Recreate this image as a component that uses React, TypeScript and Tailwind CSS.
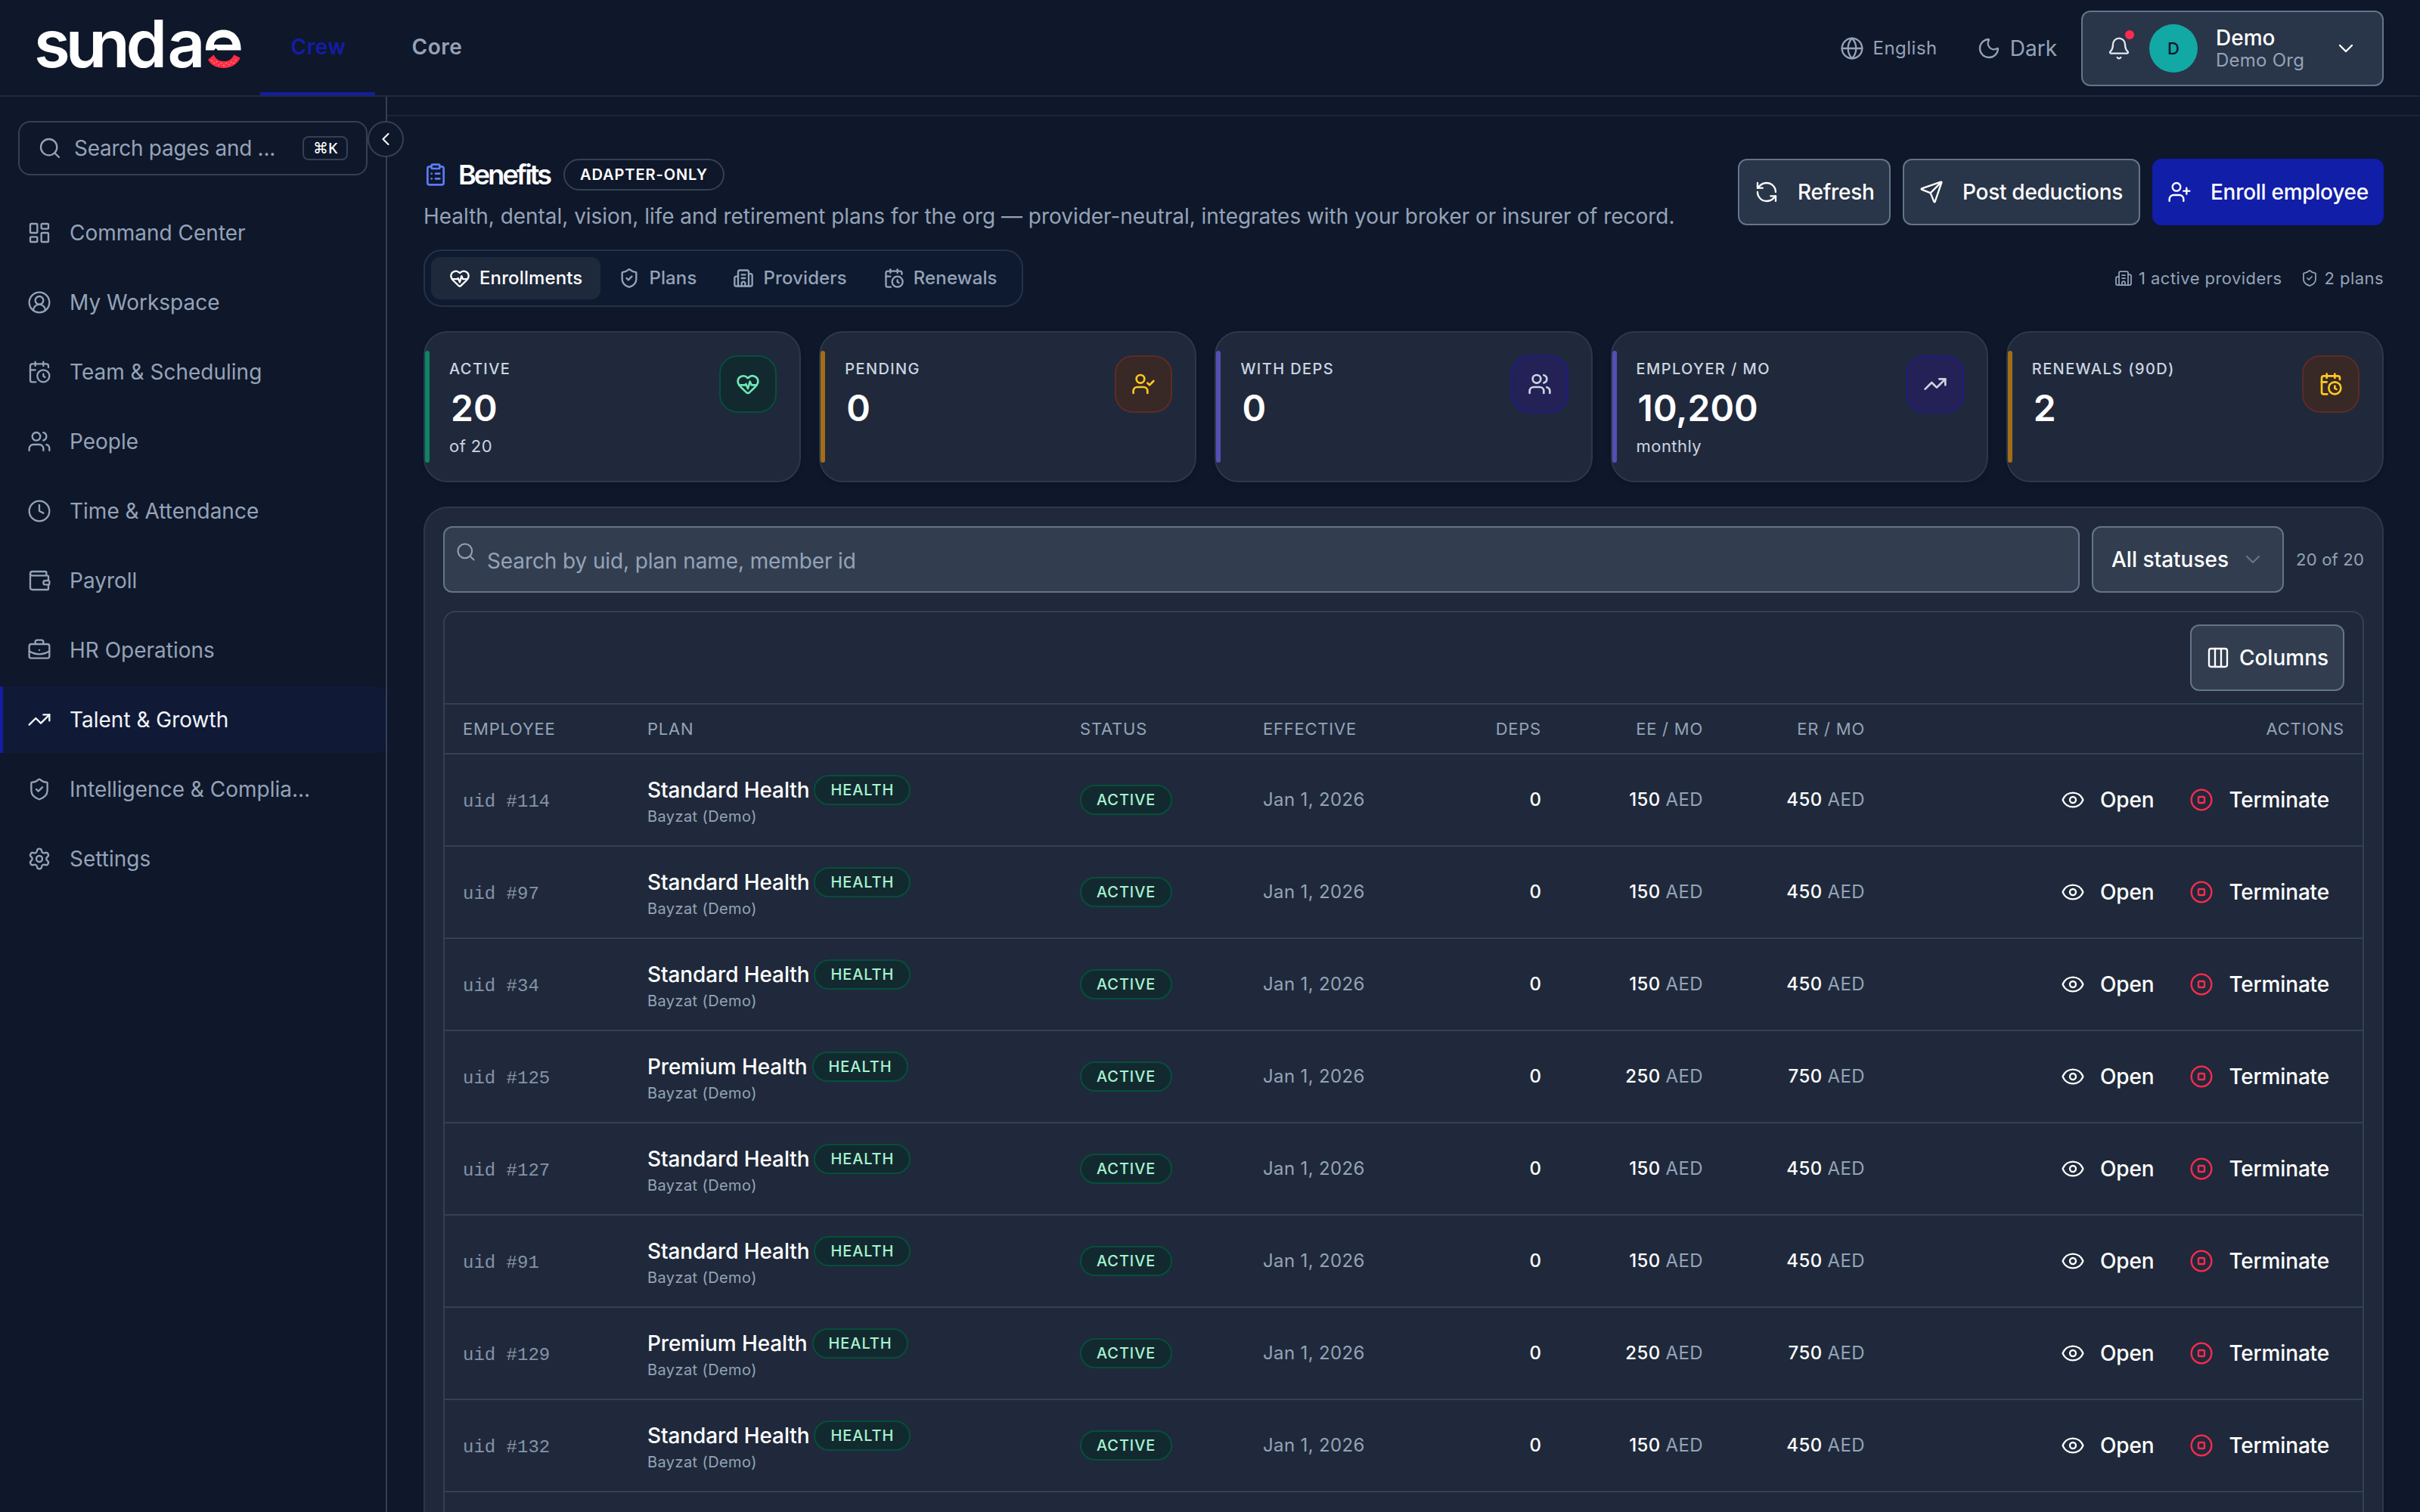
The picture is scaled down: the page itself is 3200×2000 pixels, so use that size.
import React, { useState } from "react";
import {
  BriefcaseBusiness,
  Building2,
  CalendarClock,
  ChevronDown,
  ChevronLeft,
  CircleStop,
  CircleUserRound,
  Clock,
  Columns3,
  Eye,
  Globe,
  HeartPulse,
  LayoutDashboard,
  ClipboardList,
  Bell,
  Moon,
  RefreshCcw,
  Search,
  Send,
  Settings,
  ShieldCheck,
  TrendingUp,
  UserCheck,
  UserPlus,
  Users,
  Wallet,
  type LucideIcon,
} from "lucide-react";

interface NavItem {
  label: string;
  icon: LucideIcon;
}

const NAV_ITEMS: NavItem[] = [
  { label: "Command Center", icon: LayoutDashboard },
  { label: "My Workspace", icon: CircleUserRound },
  { label: "Team & Scheduling", icon: CalendarClock },
  { label: "People", icon: Users },
  { label: "Time & Attendance", icon: Clock },
  { label: "Payroll", icon: Wallet },
  { label: "HR Operations", icon: BriefcaseBusiness },
  { label: "Talent & Growth", icon: TrendingUp },
  { label: "Intelligence & Complia...", icon: ShieldCheck },
  { label: "Settings", icon: Settings },
];

const TABS: NavItem[] = [
  { label: "Enrollments", icon: HeartPulse },
  { label: "Plans", icon: ShieldCheck },
  { label: "Providers", icon: Building2 },
  { label: "Renewals", icon: CalendarClock },
];

const TONES = {
  emerald: {
    bar: "bg-[#0f8464]",
    tile: "border-[#064e3b] bg-[#122a2f] text-[#6ee7b7]",
  },
  amber: {
    bar: "bg-[#a36c18]",
    tile: "border-[#5c2c25] bg-[#382826] text-[#ffc820]",
  },
  indigo: {
    bar: "bg-[#5250b4]",
    tile: "border-[#1d1c80] bg-[#232156] text-[#cbd5e1]",
  },
};

interface Stat {
  label: string;
  value: string;
  hint?: string;
  tone: keyof typeof TONES;
  icon: LucideIcon;
}

const STATS: Stat[] = [
  { label: "ACTIVE", value: "20", hint: "of 20", tone: "emerald", icon: HeartPulse },
  { label: "PENDING", value: "0", tone: "amber", icon: UserCheck },
  { label: "WITH DEPS", value: "0", tone: "indigo", icon: Users },
  { label: "EMPLOYER / MO", value: "10,200", hint: "monthly", tone: "indigo", icon: TrendingUp },
  { label: "RENEWALS (90D)", value: "2", tone: "amber", icon: CalendarClock },
];

interface Enrollment {
  uid: number;
  plan: string;
  ee: number;
  er: number;
}

const ENROLLMENTS: Enrollment[] = [
  { uid: 114, plan: "Standard Health", ee: 150, er: 450 },
  { uid: 97, plan: "Standard Health", ee: 150, er: 450 },
  { uid: 34, plan: "Standard Health", ee: 150, er: 450 },
  { uid: 125, plan: "Premium Health", ee: 250, er: 750 },
  { uid: 127, plan: "Standard Health", ee: 150, er: 450 },
  { uid: 91, plan: "Standard Health", ee: 150, er: 450 },
  { uid: 129, plan: "Premium Health", ee: 250, er: 750 },
  { uid: 132, plan: "Standard Health", ee: 150, er: 450 },
];

const ROW_GRID = "grid grid-cols-[122px_286px_121px_120px_88px_107px_107px_1fr] items-center border-b border-[#334155]";

const SEEDS = [
  [116, 25.6],
  [117.6, 27.2],
  [119.2, 26.4],
  [120.4, 28.4],
  [122.2, 27.4],
  [124, 28.8],
  [125.6, 27.4],
  [127.4, 28.2],
  [128.8, 26.6],
  [130.4, 27.2],
  [131.8, 25.4],
];

function Logo() {
  return (
    <svg width="136" height="34" viewBox="0 0 136 34" className="block overflow-visible">
      <text
        x="-1.5 19.4 35.2 59.4 86.800"
        y="29.8"
        fill="#fff"
        fontFamily="Inter, sans-serif"
        fontSize="43.500"
        fontWeight="600"
      >
        sunda
      </text>
      {/* the "e" is cut open and finished with a smile */}
      <path
        d="M112 18.800C112 10.500 116.500 5.200 123.700 5.200S135.300 10.500 135.300 17.800V18.800H120L118.700 17.400L117.500 18.800ZM117.400 15H129.700C129.400 12 127.200 10.200 123.700 10.200S117.900 12 117.400 15Z"
        fill="#fff"
        fillRule="evenodd"
      />
      <path
        d="M113.500 25L117.300 21.800C118.800 24.800 120.800 26 124 26S129.300 24.600 130.700 21.700L134.900 23.800C132.800 28.200 129 30.500 124 30.500S115.500 28.600 113.500 25Z"
        fill="#ff2b4e"
      />
      {SEEDS.map(([x, y]) => (
        <circle key={x} cx={x} cy={y} r="0.4" fill="#ffc820" />
      ))}
    </svg>
  );
}

function Header() {
  return (
    <header className="flex h-16 shrink-0 items-center border-b border-[#1e293b] px-6">
      <div className="w-[148px]">
        <Logo />
      </div>
      <nav className="flex h-full gap-1 text-[14px] font-semibold tracking-[0.02em]">
        <a className="flex w-19 items-center justify-center border-b-2 border-[#131da6] pt-px pl-px text-[#131da6]">
          Crew
        </a>
        <a className="flex w-[74px] items-center justify-center border-b-2 border-transparent pt-px text-[#94a3b8]">
          Core
        </a>
      </nav>
      <div className="ml-auto flex items-center pt-px text-[#94a3b8]">
        <Globe size={16} strokeWidth={1.75} />
        <span className="ml-1.5 text-[12px] tracking-[0.02em]">English</span>
        <Moon size={16} strokeWidth={1.75} className="ml-6.5" />
        <span className="ml-1.5 text-[14px]">Dark</span>
        <button className="ml-4 flex h-[50px] w-[200px] items-center rounded-md border border-[#64748b] bg-[#293548] pl-4">
          <span className="relative">
            <Bell size={16} strokeWidth={1.75} className="text-[#e2e8f0]" />
            <span className="absolute -top-1 right-[-2px] h-1.5 w-1.5 rounded-full bg-[#ff2b4e]" />
          </span>
          <span className="ml-3 flex h-8 w-8 items-center justify-center rounded-full bg-[#12a8a4] text-[11px] font-medium text-[#0f172a]">
            D
          </span>
          <span className="ml-3 flex flex-col text-left">
            <span className="text-[14px] leading-4 font-medium text-white">Demo</span>
            <span className="text-[12px] leading-[14px] tracking-[0.01em] text-[#94a3b8]">Demo Org</span>
          </span>
          <ChevronDown size={16} strokeWidth={1.75} className="mr-4 ml-auto text-white" />
        </button>
      </div>
    </header>
  );
}

function Sidebar() {
  return (
    <aside className="relative w-64 shrink-0 border-r border-[#334155] pt-4">
      <div className="mx-3 flex h-9 items-center rounded-lg border border-[#334155] px-3 text-[#94a3b8]">
        <Search size={16} strokeWidth={1.75} />
        <span className="ml-2 text-[14px] tracking-[-0.01em]">Search pages and ...</span>
        <kbd className="ml-auto flex h-4 w-[30px] items-center justify-center rounded-[4px] border border-[#334155] font-sans text-[10px] font-medium text-white">
          ⌘K
        </kbd>
      </div>
      <button className="absolute top-4 -right-3 flex h-6 w-6 items-center justify-center rounded-full border border-[#334155] bg-[#0f172a] text-white">
        <ChevronLeft size={14} strokeWidth={1.75} />
      </button>
      <nav className="mt-4 flex flex-col gap-0.5">
        {NAV_ITEMS.map(({ label, icon: Icon }) => (
          <a
            key={label}
            className={`flex h-11 items-center gap-3 border-l-2 pl-4 text-[14px] ${
              label === "Talent & Growth"
                ? "rounded-r-md border-[#131da6] bg-[#101a37] text-[#f1f5f9]"
                : "border-transparent text-[#94a3b8]"
            }`}
          >
            <Icon size={16} strokeWidth={1.75} />
            {label}
          </a>
        ))}
      </nav>
    </aside>
  );
}

function StatCard({ label, value, hint, tone, icon: Icon }: Stat) {
  return (
    <div className="relative flex h-[100px] justify-between rounded-2xl border border-[#2b384b] bg-[#1f293b] pt-[15px] pr-[15px] pl-4 shadow-sm">
      <span className={`absolute top-3 bottom-3 left-0 w-[3px] rounded-full ${TONES[tone].bar}`} />
      <div>
        <div className="mt-px text-[10px] leading-4 font-medium tracking-[0.07em] text-[#cbd5e1]">{label}</div>
        <div className="mt-0.5 pl-px text-[24px] leading-8 font-semibold text-white">{value}</div>
        {hint && <div className="mt-px text-[11px] leading-4 tracking-[0.02em] text-[#cbd5e1]">{hint}</div>}
      </div>
      <div className={`flex h-[38px] w-[38px] items-center justify-center rounded-xl border ${TONES[tone].tile}`}>
        <Icon size={16} strokeWidth={2} />
      </div>
    </div>
  );
}

function Pill({ children }: { children: React.ReactNode }) {
  return (
    <span className="inline-flex h-5 items-center rounded-full border border-[#064e3b] bg-[#122a2f] px-2.5 text-[10px] font-medium tracking-[0.045em] text-[#a7f3d0]">
      {children}
    </span>
  );
}

function Money({ amount }: { amount: number }) {
  return (
    <div className="px-3 text-right text-[12px] tracking-[0.015em] text-[#94a3b8]">
      <span className="font-medium text-white">{amount}</span> AED
    </div>
  );
}

function EnrollmentsTable() {
  return (
    <div className="mt-3 flex-1 rounded-t-lg border border-b-0 border-[#334155]">
      <div className="flex justify-end border-b border-[#334155] px-3 py-2">
        <button className="flex h-11 w-[102px] items-center justify-center gap-1.5 rounded-md border border-[#64748b] bg-[#323e50] text-[14px] font-medium text-white">
          <Columns3 size={16} strokeWidth={1.75} />
          Columns
        </button>
      </div>
      <div className={`${ROW_GRID} h-[33px] text-[11px] tracking-[0.035em] text-[#94a3b8]`}>
        <div className="px-3">EMPLOYEE</div>
        <div className="px-3">PLAN</div>
        <div className="px-3">STATUS</div>
        <div className="px-3">EFFECTIVE</div>
        <div className="px-3 text-right">DEPS</div>
        <div className="px-3 text-right">EE / MO</div>
        <div className="px-3 text-right">ER / MO</div>
        <div className="px-3 text-right">ACTIONS</div>
      </div>
      {ENROLLMENTS.map((row) => (
        <div key={row.uid} className={`${ROW_GRID} h-[61px]`}>
          <div className="px-3 pt-[3px] font-['Liberation_Mono',monospace] text-[12px] text-[#8593a8]">
            uid #{row.uid}
          </div>
          <div className="px-3 pt-0.5">
            <div className="flex items-center gap-[3px]">
              <span className="text-[14px] font-medium tracking-[-0.004em] text-white">{row.plan}</span>
              <Pill>HEALTH</Pill>
            </div>
            <div className="text-[10px] leading-[15px] tracking-[0.02em] text-[#94a3b8]">Bayzat (Demo)</div>
          </div>
          <div className="flex px-3">
            <Pill>ACTIVE</Pill>
          </div>
          <div className="px-3 text-[12px] tracking-[0.015em] text-[#94a3b8]">Jan 1, 2026</div>
          <div className="px-3 text-right text-[12px] font-medium text-white">0</div>
          <Money amount={row.ee} />
          <Money amount={row.er} />
          <div className="flex items-center justify-end pr-[22px] text-[14px] font-medium tracking-[-0.006em] text-white">
            <Eye size={16} strokeWidth={1.75} />
            <span className="ml-2.5">Open</span>
            <CircleStop size={16} strokeWidth={1.75} className="ml-[23.5px] text-[#ff2b4e]" />
            <span className="ml-2.5">Terminate</span>
          </div>
        </div>
      ))}
    </div>
  );
}

export default function App() {
  const [activeTab, setActiveTab] = useState("Enrollments");

  return (
    <div className="flex h-[1000px] w-[1600px] flex-col overflow-hidden bg-[#0f172a] font-['Inter',sans-serif] leading-5 [zoom:2]">
      <Header />
      <div className="flex min-h-0 flex-1">
        <Sidebar />
        <main className="flex min-w-0 flex-1 flex-col">
          <div className="h-[13px] shrink-0 border-b border-[#1a2538]" />
          <div className="flex min-h-0 flex-1 flex-col px-6 pt-7">
            {/* Title */}
            <div className="flex justify-between">
              <div>
                <div className="flex h-[21px] items-center">
                  <ClipboardList size={16} strokeWidth={2} className="text-[#5b7cfa]" />
                  <h1 className="ml-[7px] text-[18px] font-semibold tracking-[-0.08em] text-white">Benefits</h1>
                  <span className="ml-[9px] flex h-[21px] items-center rounded-full border border-[#334155] px-2.5 text-[10px] font-semibold tracking-[0.045em] text-white">
                    ADAPTER-ONLY
                  </span>
                </div>
                <p className="mt-[7px] text-[14px] tracking-[-0.018px] text-[#94a3b8]">
                  Health, dental, vision, life and retirement plans for the org — provider-neutral, integrates with your
                  broker or insurer of record.
                </p>
              </div>
              <div className="flex gap-2 text-[14px] font-medium tracking-[-0.01em] text-white">
                <button className="flex h-11 w-[101px] items-center gap-[12.5px] rounded-md border border-[#64748b] bg-[#293548] pl-2.5">
                  <RefreshCcw size={16} strokeWidth={1.75} />
                  Refresh
                </button>
                <button className="flex h-11 w-[157px] items-center gap-[12.5px] rounded-md border border-[#64748b] bg-[#293548] pl-2.5">
                  <Send size={16} strokeWidth={1.75} />
                  Post deductions
                </button>
                <button className="flex h-11 w-[153px] items-center gap-[12.5px] rounded-md bg-[#111ea8] pl-2.5">
                  <UserPlus size={16} strokeWidth={1.75} />
                  Enroll employee
                </button>
              </div>
            </div>

            {/* Tabs */}
            <div className="mt-3 flex items-center justify-between">
              <div className="flex h-[38px] items-center rounded-xl border border-[#243246] bg-[#0e1a2f] p-1">
                {TABS.map(({ label, icon: Icon }) => (
                  <button
                    key={label}
                    onClick={() => setActiveTab(label)}
                    className={`flex h-7 items-center gap-1.5 rounded-md px-3 text-[12px] font-medium tracking-[0.005em] ${
                      activeTab === label ? "bg-[#1e293b] text-white" : "text-[#94a3b8]"
                    }`}
                  >
                    <Icon size={14} strokeWidth={2} />
                    {label}
                  </button>
                ))}
              </div>
              <div className="flex items-center text-[11px] tracking-[0.02em] text-[#94a3b8]">
                <Building2 size={12} strokeWidth={1.75} />
                <span className="ml-1">1 active providers</span>
                <ShieldCheck size={12} strokeWidth={1.75} className="ml-3" />
                <span className="ml-1">2 plans</span>
              </div>
            </div>

            {/* Stats */}
            <div className="mt-4 grid grid-cols-5 gap-3">
              {STATS.map((stat) => (
                <StatCard key={stat.label} {...stat} />
              ))}
            </div>

            {/* Enrollments panel */}
            <div className="mt-4 flex min-h-0 flex-1 flex-col rounded-t-2xl border border-b-0 border-[#2b384b] bg-[#1f293b] px-3 pt-3">
              <div className="flex items-center gap-2">
                <div className="relative flex h-11 flex-1 items-center rounded-md border border-[#64748b] bg-[#323e50] pt-0.5 pl-7 text-[14px] tracking-[-0.004em] text-[#94a3b8]">
                  <Search size={14} strokeWidth={1.75} className="absolute top-[9px] left-[7px]" />
                  Search by uid, plan name, member id
                </div>
                <button className="flex h-11 w-[127px] items-center rounded-md border border-[#64748b] bg-[#323e50] pl-3 text-[14px] font-medium text-white">
                  All statuses
                  <ChevronDown size={16} strokeWidth={1.75} className="ml-2 text-[#64748b]" />
                </button>
                <span className="w-[45px] text-[11px] tracking-[0.01em] whitespace-nowrap text-[#94a3b8]">20 of 20</span>
              </div>
              <EnrollmentsTable />
            </div>
          </div>
        </main>
      </div>
    </div>
  );
}
